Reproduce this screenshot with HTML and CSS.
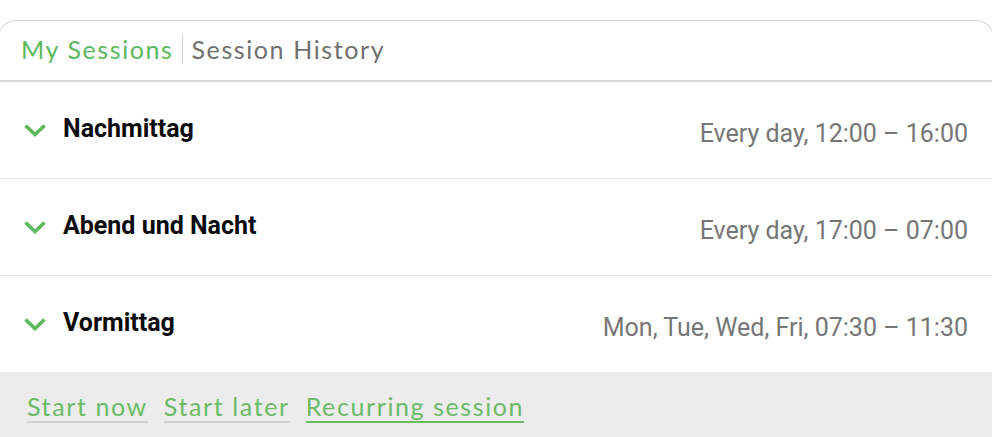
FILE: index.html
```html
<!DOCTYPE html>
<html>
<head>
<meta charset="utf-8">
<link rel="stylesheet" href="styles.css">
</head>
<body>
<div class="card">
  <div class="tabs">
    <span class="tab tab-active">My Sessions</span>
    <span class="tab-sep"></span>
    <span class="tab">Session History</span>
  </div>
  <div class="rows">
    <div class="row">
      <div class="row-left">
        <svg class="chev" width="24" height="14" viewBox="0 0 24 14"><path d="M2.5 2.5 L12 11.5 L21.5 2.5" fill="none" stroke="#5cb85c" stroke-width="3.6" stroke-linecap="butt" stroke-linejoin="miter"/></svg>
        <span class="title">Nachmittag</span>
      </div>
      <span class="when">Every day, 12:00 – 16:00</span>
    </div>
    <div class="row">
      <div class="row-left">
        <svg class="chev" width="24" height="14" viewBox="0 0 24 14"><path d="M2.5 2.5 L12 11.5 L21.5 2.5" fill="none" stroke="#5cb85c" stroke-width="3.6" stroke-linecap="butt" stroke-linejoin="miter"/></svg>
        <span class="title">Abend und Nacht</span>
      </div>
      <span class="when">Every day, 17:00 – 07:00</span>
    </div>
    <div class="row">
      <div class="row-left">
        <svg class="chev" width="24" height="14" viewBox="0 0 24 14"><path d="M2.5 2.5 L12 11.5 L21.5 2.5" fill="none" stroke="#5cb85c" stroke-width="3.6" stroke-linecap="butt" stroke-linejoin="miter"/></svg>
        <span class="title">Vormittag</span>
      </div>
      <span class="when">Mon, Tue, Wed, Fri, 07:30 – 11:30</span>
    </div>
  </div>
  <div class="footer">
    <a class="link">Start now</a>
    <a class="link">Start later</a>
    <a class="link link-strong">Recurring session</a>
  </div>
</div>
</body>
</html>
```
FILE: styles.css
```css
html, body {
  margin: 0;
  padding: 0;
  background: #fff;
}
body {
  width: 992px;
  height: 437px;
  overflow: hidden;
}
.card {
  margin: 20px -2px 0 -2px;
}
.tabs {
  display: flex;
  align-items: center;
  box-sizing: border-box;
  height: 62px;
  padding-left: 22px;
  padding-bottom: 3px;
  border: 1.5px solid #d4d4d4;
  border-bottom: 2px solid #d6d6d6;
  border-radius: 18px 18px 0 0;
  font-family: Lato, "Open Sans", sans-serif;
  font-size: 25px;
  letter-spacing: 1.6px;
  color: #6f6f6f;
}
.tab-active {
  color: #5cb85c;
}
.tab-sep {
  width: 1px;
  height: 30px;
  background: #cfcfcf;
  margin: 0 9px 0 8px;
}
.rows {
  padding: 0 2px;
}
.row {
  display: flex;
  justify-content: space-between;
  align-items: center;
  height: 96px;
  padding: 0 24px 0 23px;
  border-bottom: 1px solid #e6e6e6;
  font-family: Roboto, "Liberation Sans", sans-serif;
}
.row:last-child {
  border-bottom: none;
}
.row-left {
  display: flex;
  align-items: center;
  margin-top: -4px;
}
.chev {
  display: block;
  margin-right: 16px;
  margin-top: 3px;
}
.title {
  font-size: 25px;
  font-weight: 700;
  color: #0a0a0a;
}
.when {
  font-size: 25px;
  color: #767676;
  margin-top: 6px;
}
.footer {
  display: flex;
  align-items: center;
  gap: 16px;
  height: 65px;
  padding: 0 0 0 29px;
  background: #ececec;
  font-family: Lato, "Open Sans", sans-serif;
  font-size: 25px;
  letter-spacing: 1.6px;
}
.link {
  color: #6bbb66;
  border-bottom: 2px solid #d2d2d2;
  line-height: 26px;
  padding-bottom: 2px;
  margin-top: 6px;
}
.link-strong {
  border-bottom-color: #6bbb66;
}
```
